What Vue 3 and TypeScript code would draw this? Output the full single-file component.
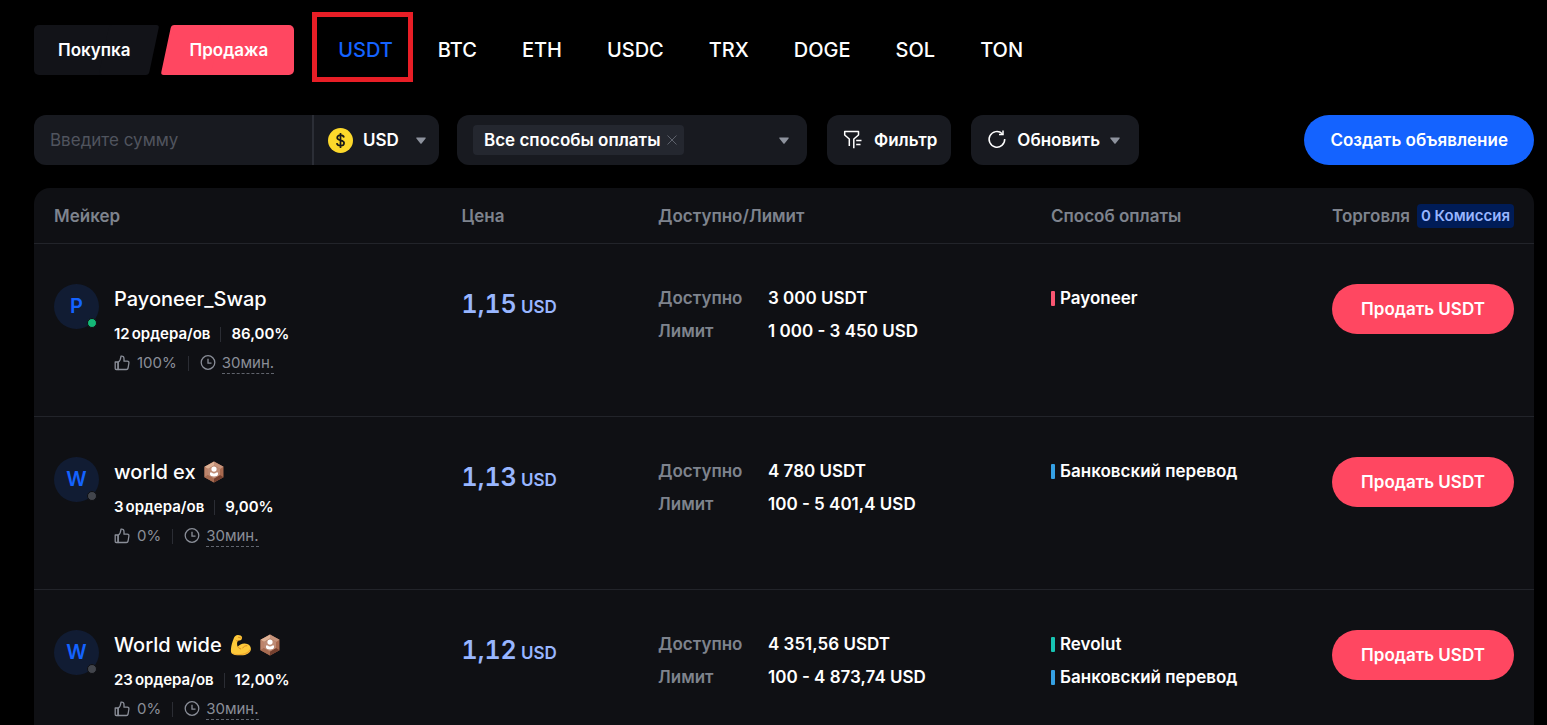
<script setup lang="ts">
import { ref } from 'vue'

interface Payment {
  name: string
  tone: 'rose' | 'azure' | 'teal'
}

interface Offer {
  maker: string
  online: boolean
  flexed: boolean
  verified: boolean
  orders: number
  completion: string
  rating: string
  time: string
  price: string
  available: string
  limit: string
  payments: Payment[]
}

const coins: string[] = ['USDT', 'BTC', 'ETH', 'USDC', 'TRX', 'DOGE', 'SOL', 'TON']

const side = ref<'buy' | 'sell'>('sell')
const coin = ref('USDT')
const amount = ref('')
const currency = ref('USD')
const method = ref('')
const refresh = ref('Обновить')

const offers: Offer[] = [
  {
    maker: 'Payoneer_Swap', online: true, flexed: false, verified: false,
    orders: 12, completion: '86,00%', rating: '100%', time: '30мин.',
    price: '1,15', available: '3 000 USDT', limit: '1 000 - 3 450 USD',
    payments: [{ name: 'Payoneer', tone: 'rose' }],
  },
  {
    maker: 'world ex', online: false, flexed: false, verified: true,
    orders: 3, completion: '9,00%', rating: '0%', time: '30мин.',
    price: '1,13', available: '4 780 USDT', limit: '100 - 5 401,4 USD',
    payments: [{ name: 'Банковский перевод', tone: 'azure' }],
  },
  {
    maker: 'World wide', online: false, flexed: true, verified: true,
    orders: 23, completion: '12,00%', rating: '0%', time: '30мин.',
    price: '1,12', available: '4 351,56 USDT', limit: '100 - 4 873,74 USD',
    payments: [
      { name: 'Revolut', tone: 'teal' },
      { name: 'Банковский перевод', tone: 'azure' },
    ],
  },
]
</script>

<template>
  <main class="page">
    <nav class="market">
      <div class="sides">
        <button type="button" class="side buy" :class="{ active: side === 'buy' }" @click="side = 'buy'"><span>Покупка</span></button>
        <button type="button" class="side sell" :class="{ active: side === 'sell' }" @click="side = 'sell'"><span>Продажа</span></button>
      </div>
      <div class="coins">
        <button
          v-for="c in coins"
          :key="c"
          type="button"
          class="coin"
          :class="{ active: c === coin }"
          @click="coin = c"
        >{{ c }}</button>
      </div>
    </nav>

    <form class="filters" @submit.prevent>
      <div class="box amount">
        <input v-model="amount" type="text" class="sum" placeholder="Введите сумму" aria-label="Введите сумму" />
        <label class="currency">
          <svg class="dollar" viewBox="0 0 25 25" aria-hidden="true">
            <circle cx="12.5" cy="12.5" r="12.5" fill="#fcd82b" />
            <path d="M16 9.4C15.6 8 14.4 7.2 12.5 7.2c-2 0-3.3 1-3.3 2.6 0 3.6 6.9 1.6 6.9 5.3 0 1.7-1.5 2.7-3.5 2.7-2.1 0-3.5-.9-3.8-2.6M12.5 5v15" fill="none" stroke="#171717" stroke-width="1.7" />
          </svg>
          <select v-model="currency" class="plain" aria-label="Валюта">
            <option>USD</option>
            <option>EUR</option>
          </select>
          <svg class="caret" viewBox="0 0 10 7" aria-hidden="true"><path d="M.8.5h8.4c.5 0 .7.5.4.9L5.6 6.4c-.3.4-.9.4-1.2 0L.4 1.4C.1 1 .3.5.8.5z" fill="#8d929d" /></svg>
        </label>
      </div>

      <div class="box methods">
        <span class="tag">
          Все способы оплаты
          <button type="button" class="remove" aria-label="Убрать">
            <svg viewBox="0 0 10 10" aria-hidden="true"><path d="M.5.5l9 9M9.5.5l-9 9" fill="none" stroke="#5d616b" /></svg>
          </button>
        </span>
        <label class="pick">
          <select v-model="method" class="plain" aria-label="Способы оплаты">
            <option value=""></option>
            <option>Payoneer</option>
            <option>Revolut</option>
            <option>Банковский перевод</option>
          </select>
          <svg class="caret" viewBox="0 0 10 7" aria-hidden="true"><path d="M.8.5h8.4c.5 0 .7.5.4.9L5.6 6.4c-.3.4-.9.4-1.2 0L.4 1.4C.1 1 .3.5.8.5z" fill="#8d929d" /></svg>
        </label>
      </div>

      <button type="button" class="box filter">
        <svg class="icon" viewBox="0 0 20 20" fill="none" stroke="#fff" stroke-width="1.5" stroke-linejoin="round" aria-hidden="true">
          <path d="M6.3 16V9L1.7 5V1.5H15.500V5L10.800 9V18.200" />
          <path d="M13.2 10.500H18.500M13.2 14.500H17.500" />
        </svg>
        Фильтр
      </button>

      <label class="box refresh">
        <svg class="icon" viewBox="0 0 20 20" fill="none" stroke="#fff" stroke-width="1.5" aria-hidden="true">
          <path d="M17.700 9A7.800 7.800 0 1 1 15.300 3.700" />
          <path d="M16 .6V4.500H12" />
        </svg>
        <select v-model="refresh" class="plain" aria-label="Обновить">
          <option>Обновить</option>
          <option>10 сек.</option>
        </select>
        <svg class="caret" viewBox="0 0 10 7" aria-hidden="true"><path d="M.8.5h8.4c.5 0 .7.5.4.9L5.6 6.4c-.3.4-.9.4-1.2 0L.4 1.4C.1 1 .3.5.8.5z" fill="#8d929d" /></svg>
      </label>

      <button type="button" class="pill create">Создать объявление</button>
    </form>

    <table class="offers">
      <thead>
        <tr>
          <th class="c-maker" scope="col">Мейкер</th>
          <th class="c-price" scope="col">Цена</th>
          <th class="c-limit" scope="col">Доступно/Лимит</th>
          <th scope="col">Способ оплаты</th>
          <th class="c-trade" scope="col"><div class="trade">Торговля <span class="fee">0 Комиссия</span></div></th>
        </tr>
      </thead>
      <tbody>
        <tr v-for="o in offers" :key="o.maker">
          <td>
            <div class="maker">
              <div class="avatar">{{ o.maker.charAt(0).toUpperCase() }}<i class="dot" :class="{ online: o.online }"></i></div>
              <div class="about">
                <div class="name">
                  {{ o.maker }}
                  <svg v-if="o.flexed" class="arm" viewBox="0 0 22 22" role="img" aria-label="Бицепс">
                    <path d="M1.8 19.5C.3 17.5.7 12 3.7 4.4 4.5 2.2 6 .9 8 1c1.900.1 3.700.7 4 2 .3 1.600-.2 2.800-1.500 3.300-1 .4-2.200.1-2.900.9-.8 1.300-.7 3.700.1 5.600 1.600-1.900 4-3.400 7-3.300 3.800.1 6.200 2.400 6.200 5.400 0 3.700-4.200 6.300-9.900 6.400-4.200.1-7.800-.3-9.200-1.800z" fill="#fdc93a" />
                    <path d="M7.7 12.8c1 1.200 1.800 1.800 3 2.100M8 6.800c-.8.200-1.500 0-2-.6M8.500 3.300l2.800.8M12.700 14c1-1.600 2.400-2.400 4.200-2.300" fill="none" stroke="#dc8b22" stroke-width="1" stroke-linecap="round" />
                    <path d="M2 19c3 1.500 10 1.700 13.800-.2 2.100-1 3.600-2.300 4.500-4.200.5 3.500-3.500 6.300-9.400 6.400-4.200.1-7.500-.3-8.900-2z" fill="#eda32e" />
                  </svg>
                  <svg v-if="o.verified" class="badge" viewBox="0 0 20 22" role="img" aria-label="Проверен">
                    <path d="M10 .5l9.500 5.300v10.400L10 21.500.5 16.200V5.800z" fill="#a8694f" />
                    <path d="M10 .5l9.500 5.300L16 8 10 4.500z" fill="#c6937b" />
                    <path d="M10 .5L.5 5.800 4 8l6-3.500z" fill="#dfb296" />
                    <path d="M.5 5.800v10.400L4 14V8z" fill="#bd846b" />
                    <path d="M.5 16.200L10 21.500v-4L4 14z" fill="#a66b51" />
                    <path d="M10 21.500l9.500-5.300L16 14l-6 3.500z" fill="#75402f" />
                    <path d="M10 4.500L16 8v6l-6 3.500L4 14V8z" fill="#bd8a74" />
                    <circle cx="10" cy="8.100" r="2.600" fill="#fff" />
                    <path d="M6 11.500h1.800c1 1.300 3.400 1.300 4.400 0H14v1.700c0 1.300-1.800 2.300-4 2.300s-4-1-4-2.300z" fill="#fff" />
                  </svg>
                </div>
                <div class="stats">
                  <span class="orders"><b>{{ o.orders }}</b><b>ордера/ов</b></span>
                  <i class="sep"></i>
                  <b>{{ o.completion }}</b>
                </div>
                <div class="meta">
                  <svg class="thumb" viewBox="0 0 16 16" fill="none" stroke="#8a8e98" stroke-width="1.3" stroke-linejoin="round" aria-hidden="true">
                    <path d="M1.200 7h2.900v7.500H2.200a1 1 0 0 1-1-1z" />
                    <path d="M4.100 7.200C5.900 6 6.800 3.800 7 1.200c1.800-.4 3 .6 3 2.500v2.500h3.400c1.100 0 1.700.8 1.500 1.800l-.8 5c-.2.900-.8 1.500-1.700 1.500H4.100z" />
                  </svg>
                  <span class="rating">{{ o.rating }}</span>
                  <i class="sep"></i>
                  <svg class="clock" viewBox="0 0 16 16" fill="none" stroke="#8a8e98" stroke-width="1.3" aria-hidden="true">
                    <circle cx="8" cy="7.500" r="6.800" />
                    <path d="M8 3.800V8.200H11.500" />
                  </svg>
                  <span class="time">{{ o.time }}</span>
                </div>
              </div>
            </div>
          </td>
          <td><div class="price"><strong>{{ o.price }}</strong> USD</div></td>
          <td>
            <dl class="limits">
              <dt>Доступно</dt><dd>{{ o.available }}</dd>
              <dt>Лимит</dt><dd>{{ o.limit }}</dd>
            </dl>
          </td>
          <td>
            <ul class="payments">
              <li v-for="p in o.payments" :key="p.name"><i class="mark" :class="p.tone"></i>{{ p.name }}</li>
            </ul>
          </td>
          <td class="c-trade"><button type="button" class="pill trade-btn">Продать {{ coin }}</button></td>
        </tr>
      </tbody>
    </table>
  </main>
</template>

<style>
body {
  margin: 0;
  background: #000;
}
</style>

<style scoped>
.page {
  box-sizing: border-box;
  min-height: 100vh;
  padding: 25px 13px 0 34px;
  color: #fff;
  font: 600 17px/24px Inter, "Liberation Sans", sans-serif;
}
button, input, select {
  margin: 0;
  padding: 0;
  border: 0;
  background: none;
  color: inherit;
  font: inherit;
}
button, select { cursor: pointer; }
svg { flex: none; }

.market { display: flex; height: 50px; align-items: stretch; }
.sides { display: flex; gap: 2px; }
.side { position: relative; z-index: 0; --fill: #121318; }
.side.active { --fill: #ff4761; }
.side::before, .side::after {
  content: "";
  position: absolute;
  z-index: -1;
  top: 0;
  bottom: 0;
  border-radius: 5px;
  background: var(--fill);
}
.side::after { width: 50px; transform: skewX(-12deg); border-radius: 3px; }
.buy { padding: 0 28px 0 24px; }
.buy::before { left: 0; right: 20px; }
.buy::after { right: 5px; }
.sell { padding: 0 26px 0 29px; }
.sell::before { left: 20px; right: 0; }
.sell::after { left: 5px; }

.coins { display: flex; gap: 45px; margin-left: 44px; font-size: 20px; font-weight: 500; }
.coin { position: relative; }
.coin.active { color: #1463ff; }
.coin.active::after {
  content: "";
  position: absolute;
  top: -13px;
  bottom: -7px;
  left: -26px;
  right: -20px;
  border: 5px solid #e81e26;
}

.filters { display: flex; height: 50px; margin-top: 40px; }
.box {
  display: flex;
  box-sizing: border-box;
  align-items: center;
  border-radius: 12px;
  background: #181a20;
}
.plain { appearance: none; outline: none; }
.plain option { background: #181a20; }
.caret { width: 10px; height: 7px; pointer-events: none; }
.icon { width: 20px; height: 20px; }

.amount { width: 405px; margin-right: 18px; }
.sum { flex: 1; min-width: 0; height: 50px; padding-left: 16px; outline: none; font-weight: 400; }
.sum::placeholder { color: #50545e; opacity: 1; }
.currency {
  display: flex;
  box-sizing: border-box;
  width: 127px;
  height: 50px;
  align-items: center;
  padding: 0 13px 0 14px;
  border-left: 2px solid #2b2e36;
}
.dollar { width: 25px; height: 25px; margin-right: 10px; }
.currency .plain { flex: 1; min-width: 0; }

.methods { width: 350px; padding: 0 18px 0 16px; margin-right: 20px; }
.tag {
  display: flex;
  height: 30px;
  align-items: center;
  gap: 6px;
  padding: 0 7px 0 11px;
  border-radius: 4px;
  background: #24272f;
  white-space: nowrap;
}
.remove { display: flex; }
.remove svg { width: 10px; height: 10px; }
.pick { display: flex; flex: 1; min-width: 0; align-items: center; }
.pick .plain { flex: 1; min-width: 0; }

.filter { gap: 11px; padding: 0 14px 0 16px; margin-right: 20px; }
.refresh { padding: 0 19px 0 16px; }
.refresh .plain { margin: 0 10px; }

.pill {
  height: 50px;
  border-radius: 25px;
  white-space: nowrap;
}
.create { padding: 0 26px; margin-left: auto; background: #1463ff; }

.offers {
  width: 100%;
  margin-top: 23px;
  border-spacing: 0;
  border-radius: 16px 16px 0 0;
  background: #0f1014;
  table-layout: fixed;
}
th {
  box-sizing: border-box;
  height: 56px;
  padding: 0;
  border-bottom: 1px solid #22242a;
  color: #7e838d;
  font-weight: 600;
  text-align: left;
}
td {
  height: 132px;
  padding: 40px 0 0;
  border-bottom: 1px solid #22242a;
  vertical-align: top;
}
th:first-child, td:first-child { padding-left: 20px; }
.c-maker { width: 28.5%; }
.c-price { width: 13.1%; }
.c-limit { width: 26.2%; }
th.c-trade { width: 202px; }
.c-trade { padding-right: 20px; }
.trade { display: flex; align-items: center; justify-content: space-between; white-space: nowrap; }
.fee {
  padding: 0 4px;
  border-radius: 4px;
  background: #001c57;
  color: #98b6ff;
  font-size: 15px;
}

.maker { display: flex; gap: 15px; }
.avatar {
  position: relative;
  width: 45px;
  height: 45px;
  border-radius: 50%;
  background: #111c33;
  color: #1463ff;
  font-size: 20px;
  line-height: 45px;
  text-align: center;
}
.dot {
  position: absolute;
  right: 2px;
  bottom: 1px;
  width: 8px;
  height: 8px;
  border: 1px solid #0f1014;
  border-radius: 50%;
  background: #42454c;
}
.dot.online { background: #14b877; }
.name { display: flex; align-items: center; gap: 8px; height: 30px; font-size: 20px; font-weight: 500; }
.arm { width: 22px; height: 22px; }
.badge { width: 20px; height: 22px; }
.stats { display: flex; align-items: center; height: 20px; margin-top: 10px; font-size: 15px; }
.stats b { font-weight: 600; }
.orders { display: flex; gap: 2px; }
.sep { width: 1px; height: 15px; margin: 0 10px; background: #2b2d34; }
.meta { display: flex; align-items: center; height: 20px; margin-top: 9px; color: #8a8e98; font-size: 15px; font-weight: 400; }
.meta .sep { margin: 0 11px; }
.thumb, .clock { width: 16px; height: 16px; margin-right: 7px; }
.clock { margin-right: 6px; }
.time { border-bottom: 1px dashed #60646d; line-height: 20px; }

.price { color: #98b6ff; line-height: 40px; }
.price strong { font-size: 25px; font-weight: 600; font-variant-numeric: tabular-nums; }

.limits { display: grid; grid-template-columns: 110px 1fr; row-gap: 5px; margin: 0; line-height: 28px; }
dt { color: #7e838d; }
dd { margin: 0; }
.payments { display: grid; gap: 5px; margin: 0; padding: 0; list-style: none; line-height: 28px; }
.payments li { display: flex; align-items: center; gap: 5px; }
.mark { width: 4px; height: 15px; border-radius: 1px; }
.rose { background: #fa5671; }
.azure { background: #35a0e3; }
.teal { background: #17c3b2; }

.trade-btn { width: 100%; background: #ff4761; }
</style>
